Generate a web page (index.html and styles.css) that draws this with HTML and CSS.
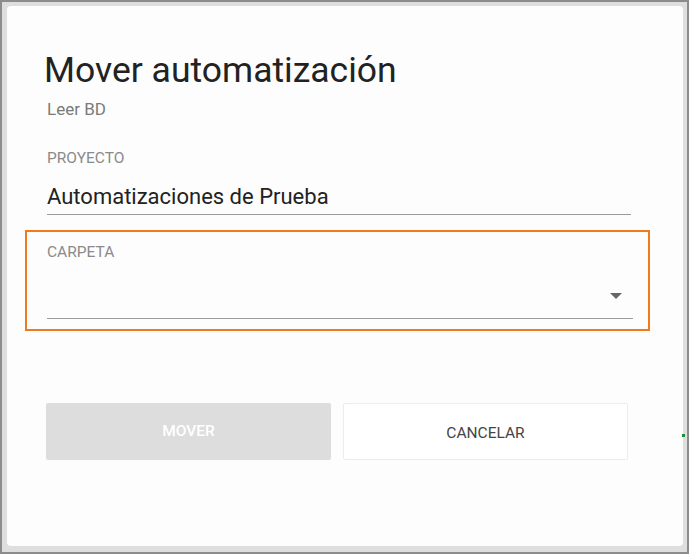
FILE: index.html
```html
<!DOCTYPE html>
<html lang="es">
<head>
<meta charset="utf-8">
<title>Mover automatización</title>
<link rel="stylesheet" href="styles.css">
</head>
<body>
<div class="screen">
  <div class="dialog">
    <h1 class="title">Mover automatización</h1>
    <p class="subtitle">Leer BD</p>
    <div class="field field-project">
      <label class="label">PROYECTO</label>
      <div class="value">Automatizaciones de Prueba</div>
    </div>
    <div class="highlight">
      <div class="field field-folder">
        <label class="label">CARPETA</label>
        <div class="select">
          <svg class="caret" width="12" height="6" viewBox="0 0 12 6"><path d="M0 0h12L6 6z" fill="#666"/></svg>
        </div>
      </div>
    </div>
    <div class="actions">
      <button class="btn btn-primary" disabled>MOVER</button>
      <button class="btn btn-secondary">CANCELAR</button>
    </div>
  </div>
  <span class="stray"></span>
</div>
</body>
</html>
```
FILE: styles.css
```css
* { box-sizing: border-box; }
html, body { margin: 0; padding: 0; }
body { font-family: Roboto, "Noto Sans", sans-serif; }
.screen {
  position: relative;
  width: 689px;
  height: 554px;
  border: 2px solid #8c8c8c;
  background: #dedede;
  padding: 4px 4px 6px 5px;
}
.stray {
  position: absolute;
  left: 680px;
  top: 432px;
  width: 3px;
  height: 3px;
  background: #1e8a3a;
}
.dialog {
  position: relative;
  height: 100%;
  background: #fdfdfd;
  border-radius: 4px;
  padding: 0 52px 0 18px;
}
.title {
  margin: 0;
  padding: 44px 0 0 19px;
  font-size: 35.5px;
  font-weight: 400;
  line-height: 40px;
  color: #222;
}
.subtitle {
  margin: 9px 0 0 22px;
  font-size: 17px;
  line-height: 20px;
  color: #7a7a7a;
}
.field { display: flex; flex-direction: column; }
.label {
  font-size: 15.5px;
  line-height: 18px;
  color: #8a8a8a;
}
.field-project {
  margin: 30px 0 0 22px;
  border-bottom: 1px solid #9a9a9a;
}
.value {
  margin-top: 16px;
  font-size: 22px;
  line-height: 28px;
  padding-bottom: 3px;
  color: #222;
}
.highlight {
  margin-top: 15px;
  margin-right: -19px;
  border: 2px solid #ef7b1e;
  padding: 11px 15px 10px 20px;
}
.select {
  height: 58px;
  border-bottom: 1px solid #9a9a9a;
  display: flex;
  align-items: flex-start;
  justify-content: flex-end;
  padding: 32px 11px 0 0;
}
.caret { display: block; }
.actions {
  margin: 72px 0 0 21px;
  display: flex;
  gap: 12px;
}
.btn {
  width: 285px;
  height: 57px;
  font-family: inherit;
  font-size: 15.5px;
  border-radius: 2px;
}
.btn-primary {
  background: #dddddd;
  border: none;
  color: #fff;
  font-weight: 500;
  padding-bottom: 3px;
}
.btn-secondary {
  background: #fff;
  border: 1px solid #ececec;
  color: #444;
  padding-top: 4px;
}
```
